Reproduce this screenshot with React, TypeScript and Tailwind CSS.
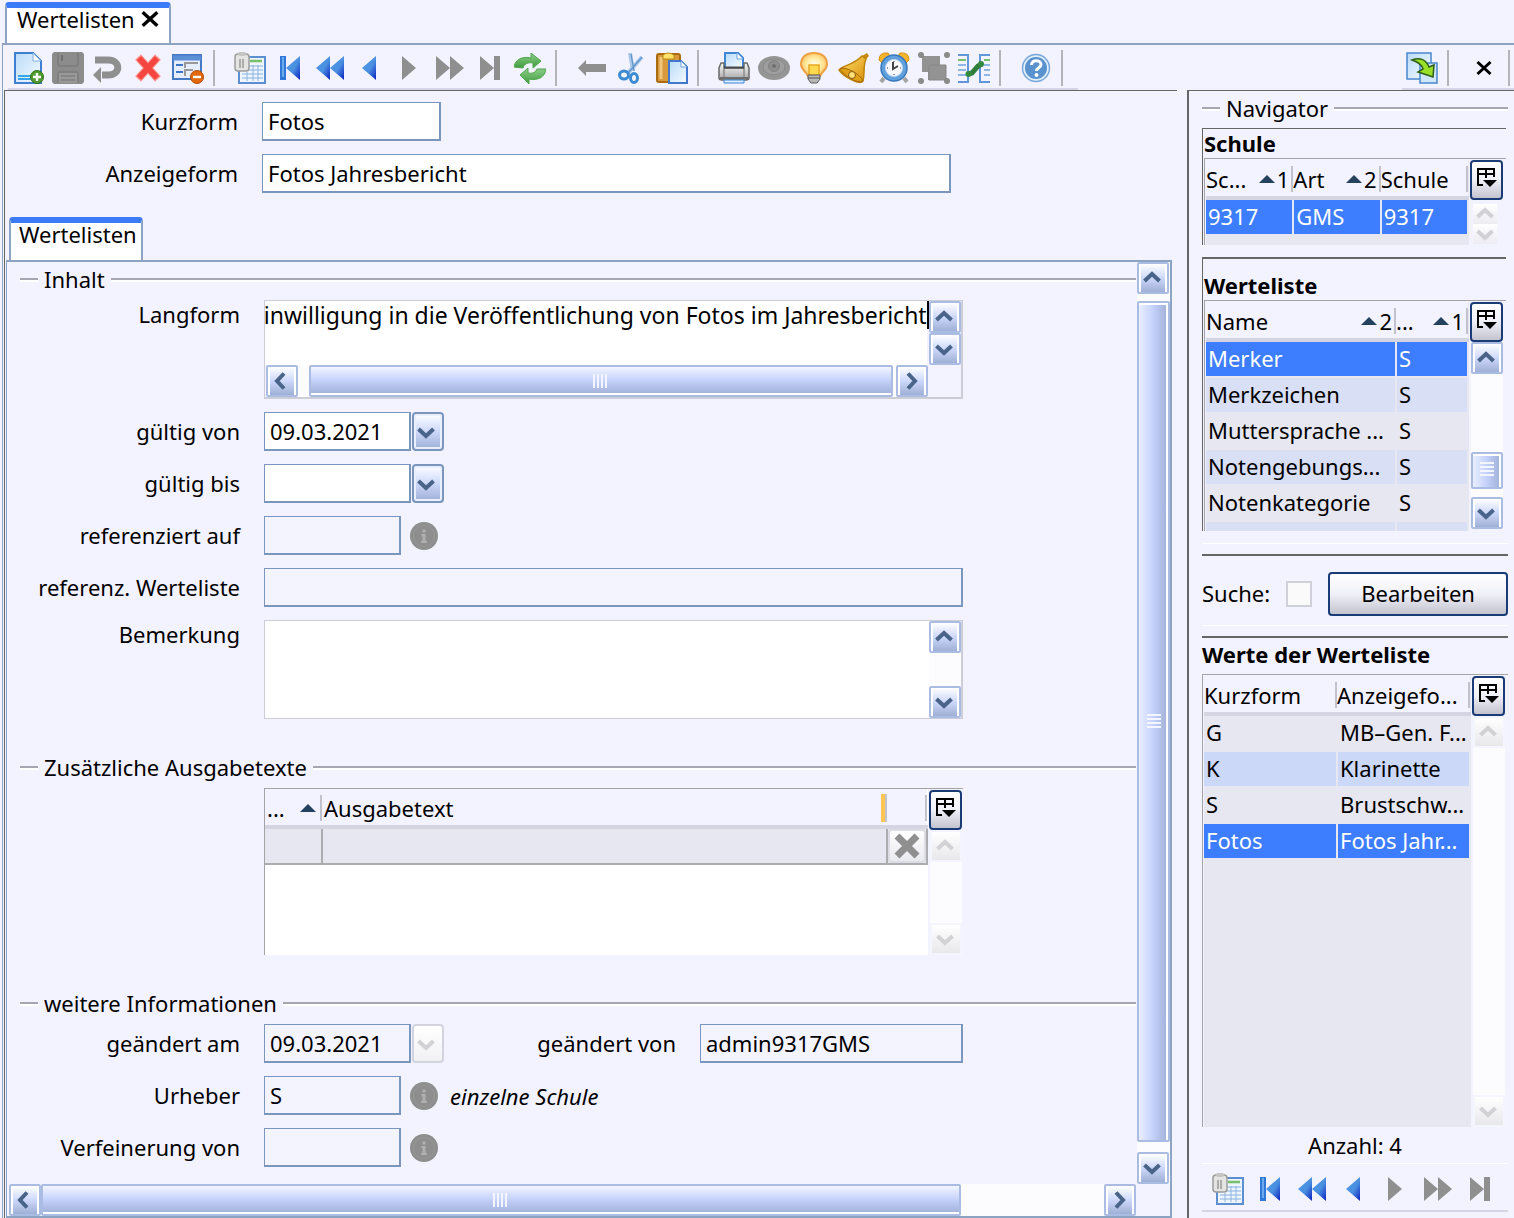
import { useEffect, useRef, type ReactNode } from 'react';

const blueFill = 'url(#blueArrow)';
const greyFill = '#8f8f8f';

/* ---------- Icons ---------- */

function Icon({ children }: { children: ReactNode }) {
  return (
    <svg width="32" height="32" viewBox="0 0 32 32" fill="none" aria-hidden="true">
      {children}
    </svg>
  );
}

function SharedGradients() {
  return (
    <svg className="absolute h-0 w-0" aria-hidden="true">
      <defs>
        <linearGradient id="blueArrow" x1="0" y1="0" x2="1" y2="1">
          <stop offset="0" stopColor="#4f9be8" />
          <stop offset="0.55" stopColor="#4a8fe0" />
          <stop offset="1" stopColor="#0a22c0" />
        </linearGradient>
        <linearGradient id="paper" x1="0" y1="0" x2="1" y2="1">
          <stop offset="0" stopColor="#b9dbf8" />
          <stop offset="1" stopColor="#f6fbff" />
        </linearGradient>
        <linearGradient id="gold" x1="0" y1="0" x2="1" y2="1">
          <stop offset="0" stopColor="#ffe46b" />
          <stop offset="1" stopColor="#d88a08" />
        </linearGradient>
        <linearGradient id="metal" x1="0" y1="0" x2="0" y2="1">
          <stop offset="0" stopColor="#fafafa" />
          <stop offset="1" stopColor="#a5a5a5" />
        </linearGradient>
        <linearGradient id="green" x1="0" y1="0" x2="0" y2="1">
          <stop offset="0" stopColor="#8fd08b" />
          <stop offset="1" stopColor="#3f9c3d" />
        </linearGradient>
        <radialGradient id="bulb">
          <stop offset="0" stopColor="#fffef0" />
          <stop offset="0.6" stopColor="#ffeaa0" />
          <stop offset="1" stopColor="#fdc96a" />
        </radialGradient>
      </defs>
    </svg>
  );
}

const NewIcon = () => (
  <Icon>
    <path d="M3 1h18l8 8v22H3z" fill="url(#paper)" stroke="#3f7fd0" strokeWidth="2" />
    <path d="M21 1v8h8z" fill="#fff" stroke="#7fb0e6" />
    <path d="M6 24h13M6 27h13" stroke="#35a5ec" strokeWidth="2" />
    <circle cx="25" cy="25" r="6.5" fill="#4f9a2c" stroke="#2f7414" />
    <path d="M25 21v8M21 25h8" stroke="#fff" strokeWidth="2.4" />
  </Icon>
);

const SaveIcon = () => (
  <Icon>
    <path d="M2 0h28l2 2v28l-2 2H2l-2-2V2z" fill="#8c8c8c" />
    <path d="M6 1v11q0 2 2 2h16q2 0 2-2V1" stroke="#7b7b7b" strokeWidth="1.5" />
    <path d="M10 3v6" stroke="#6f6f6f" strokeWidth="2" />
    <path d="M6 31V22q0-2 2-2h16q2 0 2 2v9" fill="#999" stroke="#7b7b7b" strokeWidth="1.5" />
    <path d="M9 24h14M9 28h14" stroke="#808080" strokeWidth="1.5" />
  </Icon>
);

const UndoIcon = () => (
  <Icon>
    <path d="M3 8h13c13 0 13 15 0 15h-6" stroke="#8f8f8f" strokeWidth="7" />
    <path d="M1 23l8-8v16z" fill="#8f8f8f" />
  </Icon>
);

const DeleteIcon = () => (
  <Icon>
    <path d="M6 5l20 22M26 5L6 27" stroke="#fa9a96" strokeWidth="8" />
    <path d="M7 6l18 20M25 6L7 26" stroke="#f4453e" strokeWidth="6" />
  </Icon>
);

const FormIcon = () => (
  <Icon>
    <rect x="1" y="3" width="28" height="24" fill="#e6eefb" stroke="#4579c4" strokeWidth="2" />
    <path d="M1 6h28" stroke="#5b8fd6" strokeWidth="5" />
    <path d="M4 13h7M4 20h7" stroke="#3c74c8" strokeWidth="2" />
    <path d="M13 16v-5h13M13 24v-6h8" stroke="#999" strokeWidth="2" />
    <circle cx="25" cy="25" r="6.5" fill="#e2680c" stroke="#b54a04" />
    <path d="M21 25h8" stroke="#fff" strokeWidth="2.4" />
  </Icon>
);

const TableIcon = () => (
  <Icon>
    <rect x="5" y="5" width="26" height="26" fill="#eef5fd" stroke="#5b8fd0" strokeWidth="2" />
    <path d="M16 9h12" stroke="#79c06b" strokeWidth="2.5" />
    <path d="M8 14h21M8 18h21M8 22h21M8 26h21" stroke="#a9c8ea" strokeWidth="1.5" />
    <path d="M13 20v9M19 13v16M24 13v16" stroke="#8fb4e0" strokeWidth="1" />
    <rect x="1" y="2" width="14" height="17" rx="3" fill="#e4e4e2" stroke="#9c9c9a" strokeWidth="1.5" />
    <rect x="4" y="0" width="8" height="4" rx="2" fill="#c4c4c2" />
    <path d="M6 7v9M9 7v9" stroke="#8f8f8d" strokeWidth="1.3" />
  </Icon>
);

const FirstIcon = () => (
  <Icon>
    <path d="M6 4h6v24H6z" fill="#2f78d8" />
    <path d="M8 5h2v20H8z" fill="#6cacee" />
    <path d="M26 4v24L12 16z" fill={blueFill} />
  </Icon>
);

const RewindIcon = () => (
  <Icon>
    <path d="M16 4v24L2 16z" fill={blueFill} />
    <path d="M30 4v24L16 16z" fill={blueFill} />
  </Icon>
);

const PrevIcon = () => (
  <Icon>
    <path d="M22 4v24L8 16z" fill={blueFill} />
  </Icon>
);

const NextIcon = () => (
  <Icon>
    <path d="M8 4v24l14-12z" fill={greyFill} />
  </Icon>
);

const ForwardIcon = () => (
  <Icon>
    <path d="M2 4v24l14-12zM16 4v24l14-12z" fill={greyFill} />
  </Icon>
);

const LastIcon = () => (
  <Icon>
    <path d="M6 4v24l14-12zM20 4h6v24h-6z" fill={greyFill} />
  </Icon>
);

const RefreshIcon = () => (
  <Icon>
    <path d="M0 15c1-8 9-11 17-9V1l10 8-8 7v-5c-5-1-9 1-10 5z" fill="url(#green)" stroke="#4fa54c" />
    <path d="M32 17c-1 8-8 12-17 10v5L6 23l8-7v5c5 1 8-1 9-4z" fill="url(#green)" stroke="#4fa54c" />
  </Icon>
);

const BackIcon = () => (
  <Icon>
    <path d="M2 16l8-8v4h20v8H10v4z" fill="#8f8f8f" />
  </Icon>
);

const CutIcon = () => (
  <Icon>
    <path d="M14 1l3 18M26 5L12 21" stroke="#a9c9e8" strokeWidth="4" />
    <path d="M15 2l3 17M26 5L13 20" stroke="#5c93c9" strokeWidth="1.2" />
    <ellipse cx="8" cy="23" rx="4.5" ry="4" stroke="#3c8ad2" strokeWidth="3" />
    <ellipse cx="18" cy="26" rx="3.5" ry="4.5" stroke="#3c8ad2" strokeWidth="3" />
  </Icon>
);

const PasteIcon = () => (
  <Icon>
    <rect x="1" y="2" width="23" height="28" rx="2" fill="#d99a3c" stroke="#a96a10" strokeWidth="2" />
    <path d="M5 5v22" stroke="#f0c67e" strokeWidth="3" />
    <path d="M7 7V3q5-4 11 0v4z" fill="#ffe26a" stroke="#b98a12" />
    <path d="M13 9h12l6 6v16H13z" fill="url(#paper)" stroke="#3f78cc" strokeWidth="2" />
    <path d="M25 9v6h6z" fill="#fff" stroke="#6a9ee0" />
  </Icon>
);

const PrintIcon = () => (
  <Icon>
    <path d="M7 16V1h13l5 5v10z" fill="url(#paper)" stroke="#3f86d6" strokeWidth="2" />
    <path d="M19 1v6h6" fill="#fff" stroke="#6aa4e4" />
    <path d="M3 11h3v5h20v-5h3l2 5v10q0 2-3 2H4q-3 0-3-2V16z" fill="url(#metal)" stroke="#6a6a6a" strokeWidth="1.5" />
    <path d="M6 15.500h20" stroke="#4a4a4a" strokeWidth="2" />
    <path d="M6 17v8M26 17v8" stroke="#8c8c8c" strokeWidth="1.5" />
    <path d="M2 26h28" stroke="#5a5a5a" strokeWidth="1.5" />
    <path d="M6 28h20v3H6z" fill="#dceefe" stroke="#3f86d6" />
  </Icon>
);

const EyeIcon = () => (
  <Icon>
    <ellipse cx="16" cy="16" rx="16" ry="12" fill="#959595" />
    <ellipse cx="16" cy="15" rx="11" ry="8" fill="#9e9e9e" stroke="#8a8a8a" />
    <circle cx="16" cy="14" r="5.5" fill="#8e8e8e" stroke="#828282" />
    <circle cx="16" cy="14" r="1.8" fill="#6a6a6a" />
  </Icon>
);

const BulbIcon = () => (
  <Icon>
    <path d="M16 1c8 0 13 4.500 13 11 0 6-5 7-7 12H10C8 19 3 18 3 12 3 5.500 8 1 16 1z" fill="url(#bulb)" stroke="#eda044" strokeWidth="2" />
    <path d="M11 13h10v10H11z" fill="#ffd94f" stroke="#e9a820" strokeWidth="1.5" />
    <path d="M10 23h12v4l-3 4h-6l-3-4z" fill="#b8b8b8" stroke="#5d5d5d" />
    <path d="M10 26h12" stroke="#555" />
  </Icon>
);

const BellIcon = () => (
  <Icon>
    <path d="M24 4l5-3 2 3-4 4z" fill="#c98908" />
    <path d="M24 4l4 3c-3 6-1 14-3 22-3 5-20-5-24-11 2-4 15-5 23-14z" fill="url(#gold)" stroke="#bf8309" strokeWidth="1.5" />
    <path d="M2 17c4-3 20 4 23 12-6 3-19-5-23-12z" fill="#dfa018" stroke="#a56a05" />
    <circle cx="14" cy="23" r="3.5" fill="#ffe27a" stroke="#8a5a08" />
  </Icon>
);

const AlarmIcon = () => (
  <Icon>
    <path d="M1 8q0-8 9-7l2 3-8 7zM31 8q0-8-9-7l-2 3 8 7z" fill="#f8b32c" stroke="#d8900c" />
    <path d="M6 26l-3 4M26 26l3 4" stroke="#a4a4a4" strokeWidth="4" />
    <circle cx="16" cy="16" r="13" fill="#5fa0dd" stroke="#3878bb" strokeWidth="1.5" />
    <circle cx="16" cy="16" r="8.5" fill="#f7f9fc" stroke="#c4d8ee" />
    <path d="M15 10v7l5-3" stroke="#444" strokeWidth="2" />
    <path d="M16 9v1M16 22v1M9 16h1M22 16h1" stroke="#777" strokeWidth="1.5" />
  </Icon>
);

const GroupIcon = () => (
  <Icon>
    <path d="M4 4h18v9h6v15H10v-8H4z" fill="#939393" />
    <path d="M11 13h17v15H11z" stroke="#868686" />
    <circle cx="3" cy="3" r="3" fill="#8a8a8a" />
    <circle cx="29" cy="3" r="3" fill="#8a8a8a" />
    <circle cx="3" cy="29" r="3" fill="#8a8a8a" />
    <circle cx="29" cy="29" r="3" fill="#8a8a8a" />
  </Icon>
);

const CompareIcon = () => (
  <Icon>
    <path d="M0 3h10v27H0M32 3H22v27h10" stroke="#5f97d8" strokeWidth="2" />
    <path d="M0 8h8M26 8h6" stroke="#74bf70" strokeWidth="2" />
    <path d="M0 13h8M0 18h8M0 23h8M26 13h6M26 18h6M26 23h6" stroke="#8fb6e4" strokeWidth="2" />
    <path d="M10 22l4-1 6-7 4-2" stroke="#2f7e3b" strokeWidth="5" />
    <circle cx="10.5" cy="22" r="3" fill="#348a3f" />
    <circle cx="23" cy="12" r="3" fill="#348a3f" />
  </Icon>
);

const HelpIcon = () => (
  <Icon>
    <circle cx="16" cy="16" r="13.5" fill="#e1eefb" stroke="#78a7d9" strokeWidth="1.5" />
    <circle cx="16" cy="16" r="11" fill="#5a92cf" />
    <path d="M11.500 13c0-6 9.500-5.500 9.500-.5 0 3.500-4.500 3-4.500 6.500" stroke="#fff" strokeWidth="3" />
    <circle cx="16.5" cy="23" r="2" fill="#fff" />
  </Icon>
);

const ExportIcon = () => (
  <Icon>
    <path d="M1 1h24v26H1z" fill="url(#paper)" stroke="#4a88cc" strokeWidth="1.5" />
    <path d="M14 11h17v20H14z" fill="#cfe6fb" stroke="#4a88cc" strokeWidth="1.5" />
    <path d="M6 8c7-3 14-1 17 7l5-2-1 12-15-5 5-3c-1-4-5-7-11-9z" fill="#9adf27" stroke="#2d5e1c" strokeWidth="1.5" />
  </Icon>
);

const CloseIcon = ({ size }: { size: number }) => (
  <svg width={size} height={size} viewBox="0 0 16 16" fill="none" aria-hidden="true">
    <path d="M1.500 2l13 12M14.500 2l-13 12" stroke="#000" strokeWidth="3" />
  </svg>
);

const InfoIcon = () => (
  <svg width="28" height="28" viewBox="0 0 28 28" aria-hidden="true">
    <circle cx="14" cy="14" r="14" fill="#8e8e8e" />
    <circle cx="14" cy="14" r="10.5" fill="none" stroke="#989898" />
    <path d="M12.500 7.500h3v3h-3zM11.500 12h4v7h1.500v2h-6v-2h1.500v-5h-1z" fill="#b0b0b0" />
  </svg>
);

const SortIcon = () => (
  <svg className="shrink-0" width="16" height="8" viewBox="0 0 16 8" aria-hidden="true">
    <path d="M8 0l8 8H0z" fill="#24415e" />
  </svg>
);

type Direction = 'up' | 'down' | 'left' | 'right';

const chevrons: Record<Direction, string> = {
  up: 'M1.500 12L9 5l7.500 7',
  down: 'M1.500 6L9 13l7.500-7',
  left: 'M12 1.500L5 9l7 7.500',
  right: 'M6 1.500L13 9l-7 7.500',
};

function Chevron({ dir, muted }: { dir: Direction; muted?: boolean }) {
  return (
    <svg width="18" height="18" viewBox="0 0 18 18" fill="none" aria-hidden="true">
      <path d={chevrons[dir]} stroke={muted ? '#d2d2d6' : '#496389'} strokeWidth="4" />
    </svg>
  );
}

/* ---------- Scrollbars ---------- */

function ScrollButton({ dir, muted }: { dir: Direction; muted?: boolean }) {
  return (
    <button
      type="button"
      aria-label={dir}
      disabled={muted}
      className={
        muted
          ? 'flex h-8 w-8 shrink-0 items-center justify-center border-2 border-[#f5f5ff] bg-linear-to-b from-white to-[#e8e8ec] pr-0.5'
          : 'flex h-8 w-8 shrink-0 items-center justify-center rounded-xs border-2 border-[#aabce2] bg-linear-to-b from-white via-[#cdd8fb] to-[#9fafd5] pr-0.5 shadow-[inset_2px_0_#fff,inset_-2px_0_#fff]'
      }
    >
      <Chevron dir={dir} muted={muted} />
    </button>
  );
}

type ScrollbarProps = {
  before?: number;
  thumb?: number;
  after?: number;
  muted?: boolean;
};

function VerticalScrollbar({ before = 0, thumb = 0, after = 1, muted }: ScrollbarProps) {
  return (
    <div className="flex w-8 flex-1 flex-col bg-[#fcfcfe]">
      <ScrollButton dir="up" muted={muted} />
      <div style={{ flexGrow: before }} />
      {thumb > 0 && (
        <div
          style={{ flexGrow: thumb }}
          className="flex basis-0 items-center justify-center rounded-xs border-2 border-[#aabce2] bg-linear-to-r from-[#e9efff] via-[#c3d0fa] to-[#9fafd5] shadow-[inset_-2px_0_#fff,inset_0_2px_#fff]"
        >
          <span className="h-4 w-3.5 bg-[repeating-linear-gradient(#f3f6ff_0_2px,transparent_2px_4px)]" />
        </div>
      )}
      <div style={{ flexGrow: after }} />
      <ScrollButton dir="down" muted={muted} />
    </div>
  );
}

function HorizontalScrollbar({ before = 0, thumb = 0, after = 0 }: ScrollbarProps) {
  return (
    <div className="flex h-8 min-w-0 flex-1 bg-[#fcfcfe]">
      <ScrollButton dir="left" />
      <div style={{ flexGrow: before }} />
      <div
        style={{ flexGrow: thumb }}
        className="flex basis-0 items-center justify-center rounded-xs border-2 border-[#aabce2] bg-linear-to-b from-[#f3f6ff] via-[#c3d0fa] to-[#9fafd5] shadow-[inset_0_-2px_#fff]"
      >
        <span className="h-3.5 w-4 bg-[repeating-linear-gradient(90deg,#f3f6ff_0_2px,transparent_2px_4px)]" />
      </div>
      <div style={{ flexGrow: after }} />
      <ScrollButton dir="right" />
    </div>
  );
}

/* ---------- Form parts ---------- */

function Legend({ children }: { children: ReactNode }) {
  return (
    <h2 className="mb-0.5 flex h-9 items-center gap-1.5">
      <span className="h-1 w-[18px] border-t-2 border-[#a6a6b0] bg-white" />
      <span className="pb-0.5">{children}</span>
      <span className="h-1 flex-1 border-t-2 border-[#a6a6b0] bg-white" />
    </h2>
  );
}

type RowProps = { id: string; label: string; tall?: boolean; children: ReactNode };

function Row({ id, label, tall, children }: RowProps) {
  return (
    <div className={tall ? 'flex items-start' : 'flex items-center'}>
      <label htmlFor={id} className="mr-6 w-[232px] shrink-0 pb-0.5 text-right leading-7">
        {label}
      </label>
      {children}
    </div>
  );
}

type FieldProps = { id: string; value?: string; width: string; readOnly?: boolean };

function Field({ id, value = '', width, readOnly }: FieldProps) {
  return (
    <input
      id={id}
      type="text"
      defaultValue={value}
      readOnly={readOnly}
      className={`h-[39px] border border-r-2 border-b-2 border-[#7b96bd] px-[5px] outline-none ${
        readOnly ? 'bg-[#f4f4ff]' : 'bg-white'
      } ${width}`}
    />
  );
}

function DateButton({ muted }: { muted?: boolean }) {
  return (
    <button
      type="button"
      aria-label="Datum wählen"
      disabled={muted}
      className={
        muted
          ? 'ml-px flex h-[39px] w-8 items-center justify-center rounded-sm border-2 border-[#d3d3df] bg-linear-to-b from-white to-[#f1f1f5] pr-1'
          : 'ml-px flex h-[39px] w-8 items-center justify-center rounded-sm border-2 border-[#7b96bd] bg-linear-to-b from-white via-[#cdd8fb] to-[#9fafd5] pr-1 shadow-[inset_0_0_0_2px_#e9effc]'
      }
    >
      <Chevron dir="down" muted={muted} />
    </button>
  );
}

function InfoButton() {
  return (
    <button type="button" aria-label="Information" className="ml-[9px]">
      <InfoIcon />
    </button>
  );
}

function ColumnButton() {
  return (
    <button
      type="button"
      aria-label="Spalten"
      className="flex h-10 w-[33px] shrink-0 items-center justify-center rounded-sm border-2 border-[#1a3b76] bg-linear-to-b from-white via-[#f0f0f8] to-[#c4c4d0] pb-1"
    >
      <svg width="20" height="20" viewBox="0 0 20 20" fill="none" aria-hidden="true">
        <path d="M6 17H1V1h16v8M1 6h16M9 1v9" stroke="#000" strokeWidth="2" />
        <path d="M6 12h14l-7 7z" fill="#000" />
      </svg>
    </button>
  );
}

/* ---------- Tables ---------- */

type Column = { title: string; sort?: string; width?: string };

function HeadCell({ title, sort, width = '' }: Column) {
  return (
    <th className={`h-[38px] border-b-4 border-[#d5d5e2] p-0 pt-0.5 font-normal ${width}`}>
      <div className="flex h-[26px] items-center gap-0.5 border-r-2 border-[#c2c2ce] pr-0.5">
        <span className="flex-1 truncate text-left">{title}</span>
        {sort !== undefined && <SortIcon />}
        {sort !== undefined && <span>{sort}</span>}
      </div>
    </th>
  );
}

type NavTableProps = {
  columns: Column[];
  rows: string[][];
  selected: number;
  stripe: string;
  className: string;
  scrollbar: ReactNode;
};

function NavTable({ columns, rows, selected, stripe, className, scrollbar }: NavTableProps) {
  return (
    <div className={`flex overflow-hidden border-t border-l border-[#a3a3a8] pt-px pr-0.5 pl-px ${className}`}>
      <div className="min-w-0 flex-1 bg-[#e7e7f1]">
        <table className="w-full table-fixed border-collapse">
          <thead className="bg-[#f3f3ff]">
            <tr>
              {columns.map((column) => (
                <HeadCell key={column.title} {...column} />
              ))}
            </tr>
          </thead>
          <tbody>
            {rows.map((row, i) => (
              <tr
                key={row[0]}
                className={i === selected ? 'bg-[#3d7dff] text-white' : i % 2 ? stripe : 'bg-[#e7e7f1]'}
              >
                {row.map((cell, j) => (
                  <td
                    key={j}
                    className="h-9 truncate border-r-2 border-b-2 border-[#e7e7f1] p-0 pb-0.5 pl-0.5 leading-8"
                  >
                    {cell}
                  </td>
                ))}
              </tr>
            ))}
          </tbody>
        </table>
      </div>
      <div className="flex w-[35px] flex-col items-center">
        <ColumnButton />
        {scrollbar}
      </div>
    </div>
  );
}

/* ---------- Toolbar ---------- */

type Tool = [string, () => ReactNode];

const browseTools: Tool[] = [
  ['Tabelle', TableIcon],
  ['Erster', FirstIcon],
  ['Schnell zurück', RewindIcon],
  ['Zurück', PrevIcon],
  ['Weiter', NextIcon],
  ['Schnell weiter', ForwardIcon],
  ['Letzter', LastIcon],
];

const toolGroups: Tool[][] = [
  [
    ['Neu', NewIcon],
    ['Speichern', SaveIcon],
    ['Rückgängig', UndoIcon],
    ['Löschen', DeleteIcon],
    ['Maske', FormIcon],
  ],
  [...browseTools, ['Aktualisieren', RefreshIcon]],
  [
    ['Verweis', BackIcon],
    ['Ausschneiden', CutIcon],
    ['Einfügen', PasteIcon],
  ],
  [
    ['Drucken', PrintIcon],
    ['Ansicht', EyeIcon],
    ['Hinweis', BulbIcon],
    ['Glocke', BellIcon],
    ['Wecker', AlarmIcon],
    ['Gruppieren', GroupIcon],
    ['Vergleichen', CompareIcon],
  ],
  [['Hilfe', HelpIcon]],
];

function ToolButton({ tool: [label, Glyph] }: { tool: Tool }) {
  return (
    <button type="button" aria-label={label} className="flex h-10 w-10 items-center justify-center">
      <Glyph />
    </button>
  );
}

const Separator = () => <span className="mr-[15px] ml-[5px] h-9 w-0.5 bg-[#b4b4ba]" />;

function Toolbar() {
  return (
    <div className="flex items-start pl-[5px]">
      <div className="flex h-[45px] items-center border-b-2 border-[#d6d5e8] pt-0.5">
        {toolGroups.map((group, i) => (
          <div key={i} className="flex items-center">
            {group.map((tool) => (
              <ToolButton key={tool[0]} tool={tool} />
            ))}
            <Separator />
          </div>
        ))}
      </div>
      <div className="ml-auto flex h-[45px] items-center border-b-2 border-[#d6d5e8] pt-0.5">
        <ToolButton tool={['Exportieren', ExportIcon]} />
        <Separator />
        <button type="button" aria-label="Schließen" className="flex h-10 w-10 items-center justify-center">
          <CloseIcon size={16} />
        </button>
        <span className="mr-1 ml-1 h-9 w-0.5 bg-[#b4b4ba]" />
      </div>
    </div>
  );
}

/* ---------- Left side ---------- */

function LongTextBox() {
  const box = useRef<HTMLTextAreaElement>(null);

  // keep the end of the line, where the caret stands, in view
  useEffect(() => {
    if (box.current) box.current.scrollLeft = box.current.scrollWidth;
  }, []);

  return (
    <div className="h-[99px] w-[699px] border border-r-2 border-b-2 border-[#cdcdda]">
      <div className="flex h-16">
        <textarea
          id="langform"
          ref={box}
          wrap="off"
          className="min-w-0 flex-1 resize-none overflow-hidden bg-white text-[23px] leading-7 outline-none"
          defaultValue="Einwilligung in die Veröffentlichung von Fotos im Jahresbericht"
        />
        <span className="h-7 w-0.5 bg-black" />
        <div className="flex">
          <VerticalScrollbar />
        </div>
      </div>
      <div className="flex pr-[33px] pl-px">
        <HorizontalScrollbar before={11} thumb={583} after={3} />
      </div>
    </div>
  );
}

function OutputTable() {
  return (
    <div className="ml-64 flex h-[167px] w-[699px] border-t border-l border-[#a3a3a8]">
      <div className="min-w-0 flex-1 bg-white">
        <table className="w-full table-fixed border-collapse">
          <thead className="bg-[#f3f3ff]">
            <tr>
              <th className="h-[38px] w-[57px] border-b-4 border-[#d5d5e2] p-0 pt-0.5 font-normal">
                <div className="flex h-[26px] items-center justify-between border-r-2 border-[#c2c2ce] pr-1 pl-0.5">
                  ...
                  <SortIcon />
                </div>
              </th>
              <th className="border-b-4 border-[#d5d5e2] p-0 pt-0.5 font-normal">
                <div className="flex h-7 items-center justify-between border-r-2 border-[#c2c2ce] pl-0.5">
                  Ausgabetext
                  <span className="h-7 w-1 bg-[#ffc552]" />
                </div>
              </th>
              <HeadCell title="" width="w-10" />
            </tr>
          </thead>
          <tbody className="bg-[#e7e7f1]">
            <tr className="border-b-2 border-[#ababb0]">
              <td className="h-9 border-r-2 border-[#ababb0] p-0" />
              <td className="border-r-2 border-[#ababb0] p-0" />
              <td className="border-r-2 border-[#ababb0] p-0">
                <button
                  type="button"
                  aria-label="Zeile löschen"
                  className="flex h-[34px] w-full items-center justify-center rounded-sm border-2 border-[#dcdce4] bg-linear-to-b from-white to-[#e9e9f0]"
                >
                  <svg width="26" height="26" viewBox="0 0 26 26" fill="none" aria-hidden="true">
                    <path d="M3 3l20 20M23 3L3 23" stroke="#8f8f8f" strokeWidth="7" />
                  </svg>
                </button>
              </td>
            </tr>
          </tbody>
        </table>
      </div>
      <div className="flex w-[35px] flex-col items-center pt-px">
        <ColumnButton />
        <VerticalScrollbar muted />
      </div>
    </div>
  );
}

function DetailPane() {
  return (
    <div className="mr-[5px] ml-px flex flex-1 flex-col border-2 border-l border-[#8ca3c2]">
      <div className="flex flex-1">
        <div className="flex-1 pr-px pl-px">
          <section className="flex flex-col pl-3">
            <Legend>Inhalt</Legend>
          </section>
          <div className="flex flex-col gap-[13px]">
            <Row id="langform" label="Langform" tall>
              <LongTextBox />
            </Row>
            <Row id="gueltigVon" label="gültig von">
              <Field id="gueltigVon" value="09.03.2021" width="w-[147px]" />
              <DateButton />
            </Row>
            <Row id="gueltigBis" label="gültig bis">
              <Field id="gueltigBis" width="w-[147px]" />
              <DateButton />
            </Row>
            <Row id="refAuf" label="referenziert auf">
              <Field id="refAuf" width="w-[137px]" readOnly />
              <InfoButton />
            </Row>
            <Row id="refListe" label="referenz. Werteliste">
              <Field id="refListe" width="w-[699px]" readOnly />
            </Row>
            <Row id="bemerkung" label="Bemerkung" tall>
              <div className="flex h-[99px] w-[699px] border border-r-2 border-[#cdcdda]">
                <textarea id="bemerkung" className="min-w-0 flex-1 resize-none bg-white outline-none" />
                <div className="flex w-8">
                  <VerticalScrollbar />
                </div>
              </div>
            </Row>
          </div>

          <div className="mt-[31px] pl-3">
            <Legend>Zusätzliche Ausgabetexte</Legend>
          </div>
          <OutputTable />

          <div className="mt-[31px] pl-3">
            <Legend>weitere Informationen</Legend>
          </div>
          <div className="flex flex-col gap-[13px]">
            <div className="flex items-center">
              <Row id="geaendertAm" label="geändert am">
                <Field id="geaendertAm" value="09.03.2021" width="w-[147px]" readOnly />
                <DateButton muted />
              </Row>
              <Row id="geaendertVon" label="geändert von">
                <Field id="geaendertVon" value="admin9317GMS" width="w-[263px]" readOnly />
              </Row>
            </div>
            <Row id="urheber" label="Urheber">
              <Field id="urheber" value="S" width="w-[137px]" readOnly />
              <InfoButton />
              <em className="ml-3">einzelne Schule</em>
            </Row>
            <Row id="verfeinerung" label="Verfeinerung von">
              <Field id="verfeinerung" width="w-[137px]" readOnly />
              <InfoButton />
            </Row>
          </div>
        </div>
        <div className="flex w-[33px]">
          <VerticalScrollbar before={7} thumb={836} after={10} />
        </div>
      </div>
      <div className="flex pr-[34px] pl-0.5">
        <HorizontalScrollbar thumb={917} after={143} />
      </div>
    </div>
  );
}

function EditorPane() {
  return (
    <main className="flex min-w-0 flex-1 flex-col border-t border-l border-[#666] pt-[11px]">
      <div className="ml-px flex flex-col gap-[13px]">
        <Row id="kurzform" label="Kurzform">
          <Field id="kurzform" value="Fotos" width="w-[179px]" />
        </Row>
        <Row id="anzeigeform" label="Anzeigeform">
          <Field id="anzeigeform" value="Fotos Jahresbericht" width="w-[689px]" />
        </Row>
      </div>
      <div className="mt-6 pl-1">
        <button
          type="button"
          className="block h-[43px] rounded-t-sm border-x-2 border-t-[6px] border-x-[#8ca3c2] border-t-[#3b7bf8] bg-white pr-1 pb-3.5 pl-2 leading-[23px]"
        >
          Wertelisten
        </button>
      </div>
      <DetailPane />
    </main>
  );
}

/* ---------- Right side ---------- */

function MiniScroller() {
  return (
    <div className="flex w-8 flex-col items-center pt-1 pr-1">
      <button type="button" aria-label="up" disabled className="flex h-5 w-6 items-center justify-center bg-linear-to-b from-white to-[#ececf2]">
        <Chevron dir="up" muted />
      </button>
      <button type="button" aria-label="down" disabled className="flex h-5 w-6 items-center justify-center bg-linear-to-b from-white to-[#ececf2]">
        <Chevron dir="down" muted />
      </button>
    </div>
  );
}

function Navigator() {
  return (
    <aside className="flex w-[327px] shrink-0 flex-col border-t border-l-2 border-[#666] pr-1.5 pl-[13px]">
      <div className="-mb-px">
        <Legend>Navigator</Legend>
      </div>

      <section className="mr-0.5 border-t border-l border-[#666]">
        <h3 className="pl-px leading-[29px] font-bold">Schule</h3>
        <NavTable
          className="ml-px h-[87px]"
          columns={[{ title: 'Sc...', sort: '1' }, { title: 'Art', sort: '2' }, { title: 'Schule' }]}
          rows={[['9317', 'GMS', '9317']]}
          selected={0}
          stripe="bg-[#d9dff5]"
          scrollbar={<MiniScroller />}
        />
      </section>

      <section className="mt-3 mr-0.5 border-t-2 border-l border-[#666] pt-[13px]">
        <h3 className="pb-0.5 pl-px leading-[26px] font-bold">Werteliste</h3>
        <NavTable
          className="ml-px h-[231px] pb-0.5"
          columns={[
            { title: 'Name', sort: '2' },
            { title: '...', sort: '1', width: 'w-[72px]' },
          ]}
          rows={[
            ['Merker', 'S'],
            ['Merkzeichen', 'S'],
            ['Muttersprache ...', 'S'],
            ['Notengebungs...', 'S'],
            ['Notenkategorie', 'S'],
            ['Notenbezeichn...', 'S'],
          ]}
          selected={0}
          stripe="bg-[#d9dff5]"
          scrollbar={<VerticalScrollbar before={79} thumb={34} after={8} />}
        />
      </section>

      <div className="mt-3 h-px bg-white" />
      <div className="mt-2.5 flex h-[71px] items-center border-t-2 border-[#666] pt-1.5">
        <label htmlFor="suche" className="pb-0.5">
          Suche:
        </label>
        <input
          id="suche"
          type="checkbox"
          className="ml-4 h-[26px] w-[26px] appearance-none border-2 border-[#d0d0d8] bg-[#fafafa]"
        />
        <button
          type="button"
          className="ml-4 h-11 flex-1 rounded-sm border-2 border-[#1a3b76] bg-linear-to-b from-white via-[#f0f0f8] to-[#c4c4d0] pb-0.5"
        >
          Bearbeiten
        </button>
      </div>
      <div className="h-px bg-white" />

      <section className="mt-2.5 flex flex-1 flex-col border-t-2 border-[#666]">
        <h3 className="pb-1 leading-8 font-bold">Werte der Werteliste</h3>
        <NavTable
          className="flex-1"
          columns={[{ title: 'Kurzform' }, { title: 'Anzeigefo...' }]}
          rows={[
            ['G', 'MB–Gen. F...'],
            ['K', 'Klarinette'],
            ['S', 'Brustschw...'],
            ['Fotos', 'Fotos Jahr...'],
          ]}
          selected={3}
          stripe="bg-[#cbd8f8]"
          scrollbar={<VerticalScrollbar muted />}
        />
      </section>

      <p className="text-center leading-9">Anzahl: 4</p>
      <div className="mb-1.5 flex h-[49px] items-center justify-between border-t border-b-2 border-t-white border-b-[#d6d5e8] pt-1 pr-2 pl-1.5">
        {browseTools.map((tool) => (
          <ToolButton key={tool[0]} tool={tool} />
        ))}
      </div>
    </aside>
  );
}

export default function App() {
  return (
    <div className="flex min-h-screen flex-col bg-[#f3f3ff] font-['Noto_Sans',sans-serif] text-[22px] leading-7 text-black">
      <SharedGradients />
      <div className="flex h-[43px] items-end pl-[5px]">
        <button
          type="button"
          className="flex h-[41px] w-[166px] items-start gap-1.5 rounded-t-sm border-x-2 border-t-[6px] border-x-[#8ca3c2] border-t-[#3b7bf8] bg-white pl-2.5 leading-[22px]"
        >
          Wertelisten
          <span className="pt-0.5">
            <CloseIcon size={18} />
          </span>
        </button>
      </div>
      <div className="ml-0.5 flex flex-1 flex-col border-t-2 border-l border-[#8ca3c2]">
        <Toolbar />
        <div className="ml-px flex flex-1 gap-2.5">
          <EditorPane />
          <Navigator />
        </div>
      </div>
    </div>
  );
}
